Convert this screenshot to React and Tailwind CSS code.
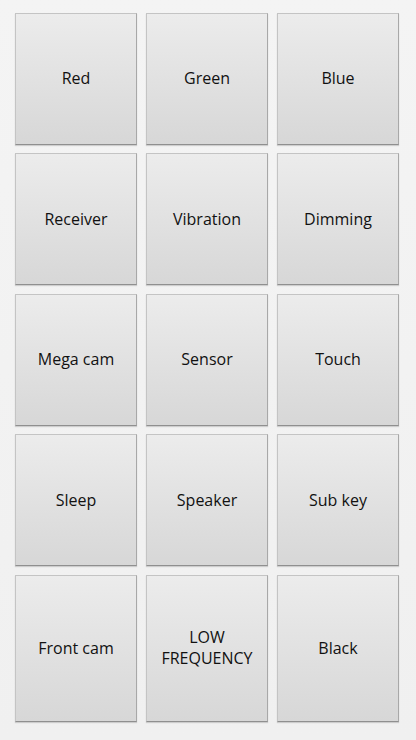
import React from 'react';

const rows = [
    ['Red', 'Green', 'Blue'],
    ['Receiver', 'Vibration', 'Dimming'],
    ['Mega cam', 'Sensor', 'Touch'],
    ['Sleep', 'Speaker', 'Sub key'],
    ['Front cam', 'LOW\nFREQUENCY', 'Black'],
];

const TestButton = ({ label }) => (
    <button
        className="flex items-center justify-center whitespace-pre-line text-center leading-[21px] text-[16px] text-[#111111] bg-gradient-to-b from-[#ececec] to-[#d7d7d7] border border-[#c4c4c4] border-b-[#8f8f8f] border-r-[#a8a8a8] shadow-[0_1px_1px_rgba(0,0,0,0.15)]"
    >
        {label}
    </button>
);

const App = () => {
    return (
        <div
            className="w-[416px] h-[740px] overflow-hidden bg-gradient-to-b from-[#f4f4f4] to-[#f0f0f0] pt-[12.5px] pl-[15px]"
            style={{ fontFamily: '"Open Sans", "Noto Sans", sans-serif' }}
        >
            <div className="grid grid-cols-[122px_122px_122px] grid-rows-[132px_132px_132px_132px_147px] gap-x-[9px] gap-y-[8.5px]">
                {rows.flat().map((label) => (
                    <TestButton key={label} label={label} />
                ))}
            </div>
        </div>
    );
};

export default App;
